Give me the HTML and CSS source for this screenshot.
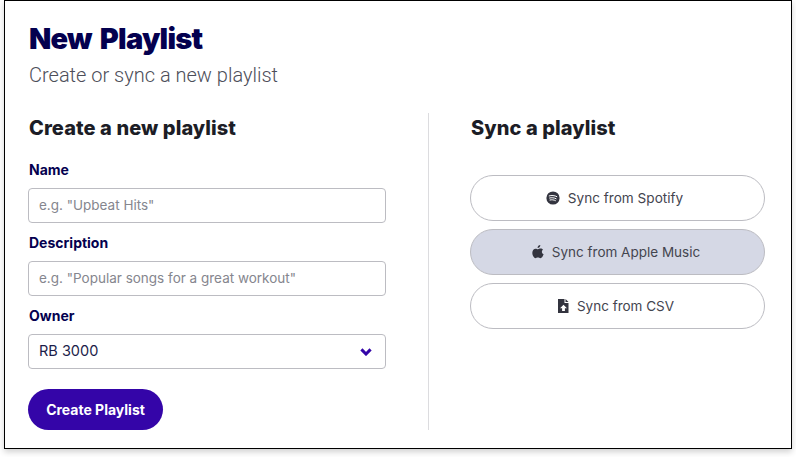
FILE: index.html
```html
<!DOCTYPE html>
<html lang="en">
<head>
<meta charset="utf-8">
<title>New Playlist</title>
<link rel="stylesheet" href="styles.css">
</head>
<body>
<main class="window">
  <header class="head">
    <h1 class="title">New Playlist</h1>
    <p class="subtitle">Create or sync a new playlist</p>
  </header>
  <div class="columns">
    <section class="col-create">
      <h2 class="section-title">Create a new playlist</h2>
      <form class="form">
        <div class="field">
          <label class="label" for="name">Name</label>
          <input class="control" id="name" type="text" placeholder="e.g. &quot;Upbeat Hits&quot;">
        </div>
        <div class="field">
          <label class="label" for="desc">Description</label>
          <input class="control" id="desc" type="text" placeholder="e.g. &quot;Popular songs for a great workout&quot;">
        </div>
        <div class="field">
          <label class="label">Owner</label>
          <div class="control select">
            <span>RB 3000</span>
            <svg class="chevron" width="12" height="8" viewBox="0 0 12 8"><path d="M1.400 1.400 6 6l4.600-4.600" fill="none" stroke="#3405a8" stroke-width="3"/></svg>
          </div>
        </div>
        <button class="primary" type="button">Create Playlist</button>
      </form>
    </section>
    <section class="col-sync">
      <h2 class="section-title">Sync a playlist</h2>
      <div class="sync-list">
        <button class="sync sync-spotify" type="button">
          <svg width="14" height="14" viewBox="0 0 14 14"><circle cx="7" cy="7" r="6.600" fill="#33343f"/><path d="M3.200 4.900c2.500-.7 5.200-.5 7.600.7M3.600 7c2.100-.5 4.500-.4 6.500.7M4 9c1.800-.4 3.800-.3 5.400.6" fill="none" stroke="#fff" stroke-width="1" stroke-linecap="round"/></svg>
          <span>Sync from Spotify</span>
        </button>
        <button class="sync active" type="button">
          <svg width="12" height="14" viewBox="0 0 12 14"><path d="M8.300 0c.1 1.500-1.200 3-2.700 3C5.400 1.500 6.800.1 8.300 0zM11 4.800c-1.700 1-1.500 3.600.6 4.400-.6 1.700-1.800 4-3.200 4-.9 0-1.400-.6-2.500-.6s-1.700.6-2.500.6C1.900 13.200.3 10.200.3 7.900.3 5.200 2 3.700 3.600 3.700c1 0 1.800.6 2.400.6s1.500-.7 2.700-.7c.9 0 1.800.4 2.300 1.200z" fill="#33343f"/></svg>
          <span>Sync from Apple Music</span>
        </button>
        <button class="sync" type="button">
          <svg width="11" height="14" viewBox="0 0 11 14"><path d="M0 0h6.500v4h4v10H0z" fill="#33343f"/><path d="M7.500 0l3 3h-3z" fill="#33343f"/><path d="M5.500 5.800 9 9.300H6.900V12H4.100V9.300H2z" fill="#fff"/></svg>
          <span>Sync from CSV</span>
        </button>
      </div>
    </section>
  </div>
</main>
</body>
</html>
```
FILE: styles.css
```css
* { box-sizing: border-box; }
html, body { margin: 0; padding: 0; background: #fff; }
body {
  width: 796px;
  height: 457px;
  overflow: hidden;
  padding-left: 4px;
  font-family: Inter, "Liberation Sans", sans-serif;
}
.window {
  width: 788px;
  height: 449px;
  border: 1px solid #000;
  background: #fff;
  box-shadow: 0 3px 6px rgba(0, 0, 0, .18);
  padding: 20px 24px 0 23px;
}
.head { height: 92px; padding-left: 1px; }
.title {
  margin: 0;
  font-size: 29px;
  line-height: 36px;
  font-weight: 900;
  letter-spacing: -.75px;
  word-spacing: 3px;
  color: #04004f;
}
.subtitle {
  margin: 4px 0 0;
  font-family: Roboto, Inter, sans-serif;
  font-size: 20px;
  line-height: 28px;
  font-weight: 300;
  color: #4d4e59;
}
.columns { display: flex; height: 317px; }
.col-create {
  width: 401px;
  padding-right: 42px;
  border-right: 1px solid #dcdcdf;
}
.col-sync { padding-left: 41px; width: 337px; }
.section-title {
  margin: 0;
  padding: 3px 0 0 1px;
  font-size: 20px;
  line-height: 24px;
  font-weight: 800;
  letter-spacing: .08px;
  color: #1c1d26;
}
.form { display: flex; flex-direction: column; margin-top: 21px; }
.field { display: flex; flex-direction: column; margin-bottom: 11.200px; }
.label {
  padding-left: 1px;
  font-size: 14px;
  line-height: 17px;
  font-weight: 700;
  color: #04004f;
  margin-bottom: 10px;
}
.control {
  width: 358px;
  height: 35px;
  border: 1px solid #bcbcc2;
  border-radius: 4px;
  padding: 0 10px 2px;
  font: 400 13.500px Inter, "Liberation Sans", sans-serif;
  color: #1c1d4a;
  background: #fff;
}
.control::placeholder { color: #85868e; opacity: 1; }
.select {
  display: flex;
  align-items: center;
  justify-content: space-between;
  padding-right: 13px;
  font-size: 14.500px;
}
.chevron { display: block; margin-top: 2px; }
.primary {
  margin-top: 8px;
  width: 135px;
  height: 41px;
  border: 0;
  border-radius: 21px;
  background: #3405a8;
  color: #fff;
  font: 700 14px Inter, "Liberation Sans", sans-serif;
}
.sync-list { display: flex; flex-direction: column; gap: 8px; margin-top: 35px; }
.sync {
  width: 295px;
  height: 46px;
  padding: 0 3px 1px 0;
  border: 1px solid #bcbcc2;
  border-radius: 23px;
  background: #fff;
  color: #44454f;
  font: 400 13.500px Inter, "Liberation Sans", sans-serif;
  display: flex;
  align-items: center;
  justify-content: center;
  gap: 8px;
}
.sync-spotify { padding-right: 6px; font-size: 13.600px; }
.sync.active { background: #d5d8e5; }
```
